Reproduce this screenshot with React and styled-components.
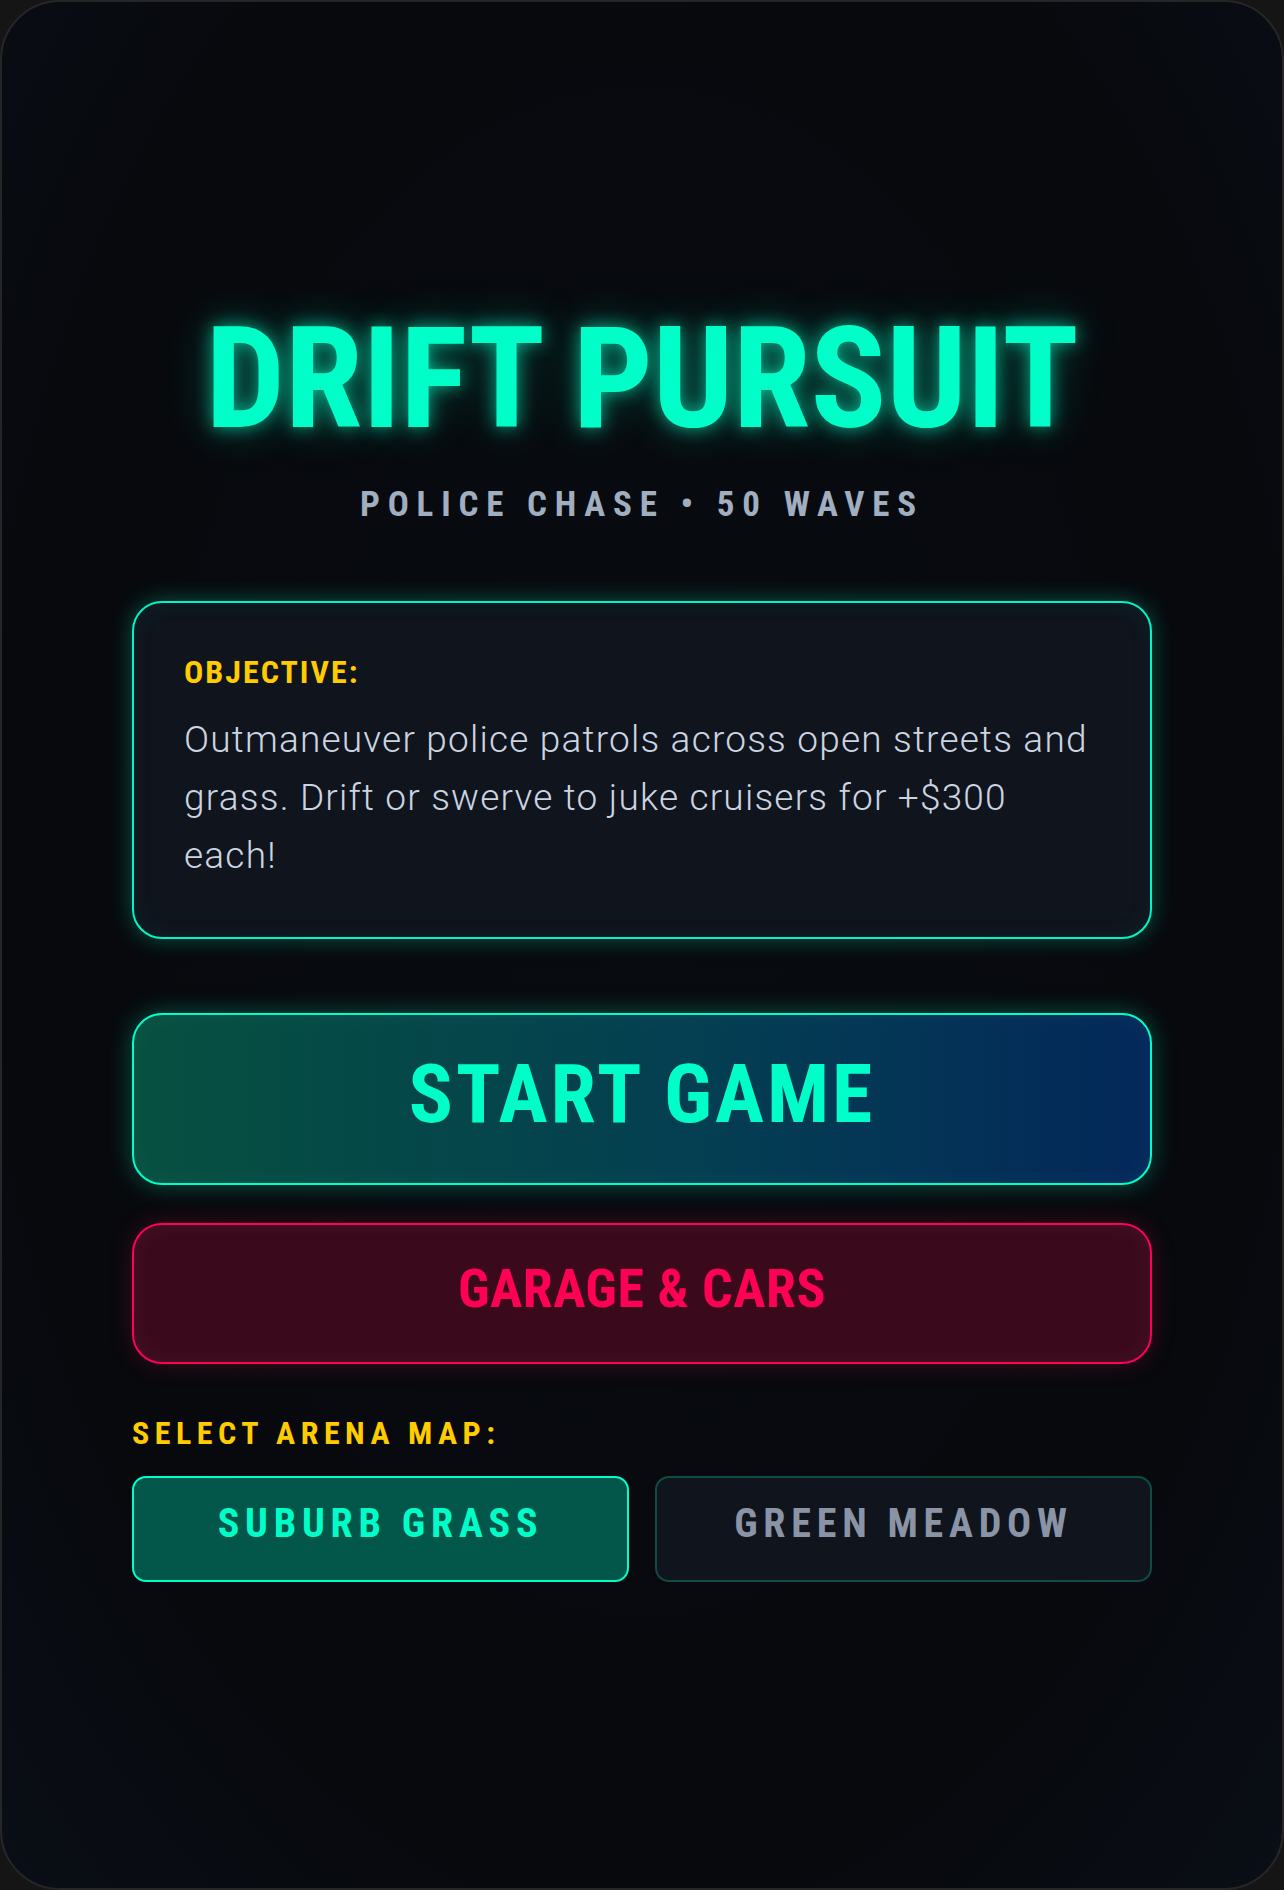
import React, { useState } from "react";
import styled, { createGlobalStyle } from "styled-components";

const GlobalStyle = createGlobalStyle`
  html, body {
    margin: 0;
    padding: 0;
    background: #151515;
  }
  * {
    box-sizing: border-box;
  }
`;

const display = `"Roboto Condensed", "Liberation Sans Narrow", "DejaVu Sans Condensed", sans-serif`;
const text = `Roboto, "Liberation Sans", sans-serif`;

const Screen = styled.main`
  min-height: 100vh;
  border: 2px solid #262626;
  border-radius: 60px;
  background: radial-gradient(ellipse at 50% 45%, #080b10 0%, #07090d 70%, #0a0e16 100%);
  display: flex;
  align-items: center;
  justify-content: center;
  overflow: hidden;
`;

const Menu = styled.div`
  width: 1020px;
  display: flex;
  flex-direction: column;
`;

const Title = styled.h1`
  margin: 0;
  text-align: center;
  font-family: ${display};
  font-weight: 700;
  font-size: 141px;
  line-height: 1;
  letter-spacing: -0.3px;
  color: #00ffc8;
  text-shadow: 0 0 18px rgba(0, 255, 200, 0.65), 0 0 46px rgba(0, 255, 200, 0.3);
`;

const Subtitle = styled.p`
  margin: 38px 0 0;
  text-align: center;
  font-family: ${display};
  font-weight: 700;
  font-size: 35px;
  line-height: 1;
  letter-spacing: 7.8px;
  color: #a0aec0;
`;

const Briefing = styled.section`
  margin-top: 79px;
  padding: 50px 50px 52px;
  border: 2px solid #00f5c4;
  border-radius: 30px;
  background: #0f141d;
  box-shadow: 0 0 22px rgba(0, 255, 200, 0.3), inset 0 0 24px rgba(0, 255, 200, 0.05);
`;

const Label = styled.h3`
  margin: 0;
  font-family: ${display};
  font-weight: 700;
  font-size: 32px;
  line-height: 1.2;
  letter-spacing: ${({ $wide }) => ($wide ? "5.5px" : "2px")};
  color: #ffcc00;
`;

const Body = styled.p`
  margin: 20px 0 0;
  font-family: ${text};
  font-weight: 300;
  font-size: 37px;
  line-height: 58px;
  letter-spacing: 1.2px;
  color: #cbd5e1;
`;

const Actions = styled.div`
  margin-top: 74px;
  display: flex;
  flex-direction: column;
  gap: 38px;
`;

const BigButton = styled.button`
  height: ${({ $primary }) => ($primary ? "172px" : "141px")};
  padding: 0 0 10px;
  border-radius: 30px;
  border: 2px solid ${({ $primary }) => ($primary ? "#00ffc8" : "#ff0055")};
  background: ${({ $primary }) =>
    $primary ? "linear-gradient(90deg, #065040 0%, #043f52 55%, #03285a 100%)" : "#3a0a1c"};
  color: ${({ $primary }) => ($primary ? "#00ffc8" : "#ff0055")};
  box-shadow: 0 0 24px
      ${({ $primary }) => ($primary ? "rgba(0, 255, 200, 0.3)" : "rgba(255, 0, 85, 0.22)")},
    inset 0 0 26px rgba(255, 255, 255, 0.04);
  font-family: ${display};
  font-weight: 700;
  font-size: ${({ $primary }) => ($primary ? "82px" : "54px")};
  letter-spacing: ${({ $primary }) => ($primary ? "3px" : "0.5px")};
  line-height: 1;
  cursor: pointer;
`;

const MapSection = styled.div`
  margin-top: 50px;
`;

const MapGrid = styled.div`
  margin-top: 24px;
  display: grid;
  grid-template-columns: 1fr 1fr;
  gap: 26px;
`;

const MapButton = styled.button`
  height: 106px;
  padding: 0 0 10px;
  border-radius: 14px;
  border: 2px solid ${({ $active }) => ($active ? "#00ffc8" : "#0e4c44")};
  background: ${({ $active }) => ($active ? "#03564a" : "#0f141d")};
  color: ${({ $active }) => ($active ? "#00ffc8" : "#8a94a6")};
  font-family: ${display};
  font-weight: 700;
  font-size: 40px;
  letter-spacing: 5.8px;
  line-height: 1;
  cursor: pointer;
`;

const maps = ["SUBURB GRASS", "GREEN MEADOW"];

export default function App() {
  const [arena, setArena] = useState(maps[0]);

  return (
    <>
      <GlobalStyle />
      <Screen>
        <Menu>
          <Title>DRIFT PURSUIT</Title>
          <Subtitle>POLICE CHASE • 50 WAVES</Subtitle>

          <Briefing>
            <Label>OBJECTIVE:</Label>
            <Body>
              Outmaneuver police patrols across open streets and grass. Drift or swerve to juke
              cruisers for +$300 each!
            </Body>
          </Briefing>

          <Actions>
            <BigButton $primary>START GAME</BigButton>
            <BigButton>GARAGE &amp; CARS</BigButton>
          </Actions>

          <MapSection>
            <Label $wide>SELECT ARENA MAP:</Label>
            <MapGrid>
              {maps.map((m) => (
                <MapButton key={m} $active={arena === m} onClick={() => setArena(m)}>
                  {m}
                </MapButton>
              ))}
            </MapGrid>
          </MapSection>
        </Menu>
      </Screen>
    </>
  );
}
